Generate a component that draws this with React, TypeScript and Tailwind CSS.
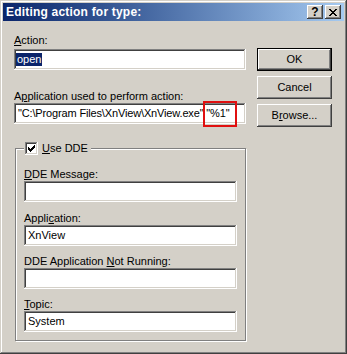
const raised =
  'shadow-[inset_-1px_-1px_#404040,inset_1px_1px_#ffffff,inset_-2px_-2px_#808080,inset_2px_2px_#d4d0c8]';
const sunken =
  'shadow-[inset_-1px_-1px_#ffffff,inset_1px_1px_#808080,inset_-2px_-2px_#d4d0c8,inset_2px_2px_#404040]';

const U = ({ children }: { children: string }) => <span className="underline underline-offset-[1px]">{children}</span>;

const Field = ({ value, width, tight }: { value?: string; width: string; tight?: boolean }) => (
  <div className={`flex h-[21px] ${width} items-center bg-white pl-[4px] ${sunken}`}>
    <span className={`whitespace-pre ${tight ? 'tracking-[-0.15px]' : ''}`}>{value}</span>
  </div>
);

const Btn = ({ children, isDefault }: { children: any; isDefault?: boolean }) => (
  <div className={`h-[23px] w-[75px] ${isDefault ? 'border border-black' : ''}`}>
    <div className={`flex h-full w-full items-center justify-center ${raised}`}>{children}</div>
  </div>
);

const Label = ({ children, className }: { children: any; className?: string }) => (
  <div className={`h-[13px] leading-[13px] ${className ?? ''}`}>{children}</div>
);

export default function App() {
  return (
    <div
      className={`flex h-[354px] w-[347px] flex-col bg-[#d4d0c8] p-[3px] text-[11px] text-black shadow-[inset_-1px_-1px_#404040,inset_1px_1px_#d4d0c8,inset_-2px_-2px_#808080,inset_2px_2px_#ffffff]`}
      style={{ fontFamily: '"Liberation Sans", Arial, sans-serif' }}
    >
      {/* title bar */}
      <div className="flex h-[18px] items-center bg-gradient-to-r from-[#0a246a] to-[#a6caf0] pl-[3px] pr-[3px]">
        <span className="flex-1 text-[12px] font-bold tracking-[0.2px] text-white">Editing action for type:</span>
        <div className={`flex h-[14px] w-[16px] items-center justify-center bg-[#d4d0c8] ${raised}`}>
          <span className="text-[12px] font-bold leading-none">?</span>
        </div>
        <div className={`ml-[2px] flex h-[14px] w-[16px] items-center justify-center bg-[#d4d0c8] ${raised}`}>
          <svg width="8" height="7" viewBox="0 0 8 7" shapeRendering="crispEdges">
            <path
              d="M0 0h2v1h1v1h2V1h1V0h2v1H7v1H6v1H5v1h1v1h1v1h1v1H6V6H5V5H3v1H2v1H0V6h1V5h1V4h1V3H2V2H1V1H0z"
              fill="#000"
            />
          </svg>
        </div>
      </div>

      <div className="flex flex-1">
        <div className="ml-[11px] flex w-[232px] flex-col pt-[13px]">
          <Label>
            <U>A</U>ction:
          </Label>
          <div className={`mt-[2px] flex h-[21px] w-[232px] items-center bg-white pl-[2px] ${sunken}`}>
            <span className="bg-[#0a246a] px-[1px] leading-[13px] text-white">open</span>
          </div>

          <Label className="mt-[20px]">
            A<U>p</U>plication used to perform action:
          </Label>
          <div className="relative">
            <Field width="w-[232px]" tight value={'"C:\\Program Files\\XnView\\XnView.exe" "%1"'} />
            <div className="absolute left-[189px] top-[-2px] h-[26px] w-[34px] border-2 border-[#e01010]" />
          </div>

          <fieldset className="mt-[18px] ml-[1px] w-[231px] border border-[#808080] pb-[8px] pl-[8px] pt-[13px] shadow-[1px_1px_#ffffff,inset_1px_1px_#ffffff]">
            <legend className="flex h-[13px] items-center bg-[#d4d0c8] px-[1px]">
              <div className={`flex h-[13px] w-[13px] items-center justify-center bg-white ${sunken}`}>
                <svg width="7" height="7" viewBox="0 0 7 7" shapeRendering="crispEdges">
                  <path d="M0 2h1v1h1v1h1V3h1V2h1V1h1V0h1v3H6v1H5v1H4v1H3v1H2V6H1V5H0z" fill="#000" />
                </svg>
              </div>
              <span className="ml-[4px] pr-[2px] leading-[13px]">
                <U>U</U>se DDE
              </span>
            </legend>

            <Label>
              <U>D</U>DE Message:
            </Label>
            <Field width="w-[213px]" />
            <Label className="mt-[10px]">
              Appli<U>c</U>ation:
            </Label>
            <Field width="w-[213px]" value="XnView" />
            <Label className="mt-[9px]">
              DDE Application <U>N</U>ot Running:
            </Label>
            <Field width="w-[213px]" />
            <Label className="mt-[9px]">
              <U>T</U>opic:
            </Label>
            <Field width="w-[213px]" value="System" />
          </fieldset>
        </div>

        <div className="ml-[11px] flex flex-col gap-[5px] pt-[27px]">
          <Btn isDefault>OK</Btn>
          <Btn>Cancel</Btn>
          <Btn>
            <span>
              B<U>r</U>owse...
            </span>
          </Btn>
        </div>
      </div>
    </div>
  );
}
